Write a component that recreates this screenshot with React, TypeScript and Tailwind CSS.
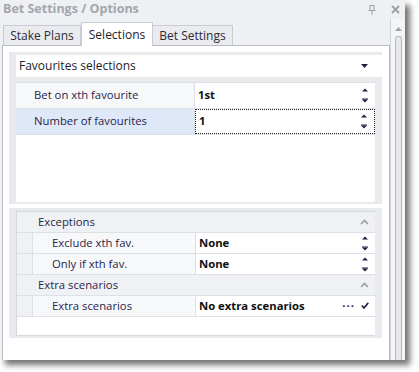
const font = { fontFamily: '"Open Sans", "Noto Sans", sans-serif' };

const Spinner = () => (
  <svg width="8" height="17" viewBox="0 0 8 17" className="shrink-0">
    <path d="M4 1.5 L7 4.5 L1 4.5 Z" fill="#1f2040" />
    <path d="M1 12.5 L7 12.5 L4 15.5 Z" fill="#1f2040" />
    <rect x="1" y="11.5" width="6" height="1" fill="#1f2040" />
  </svg>
);

const Chevron = () => (
  <svg width="9" height="6" viewBox="0 0 9 6" className="shrink-0">
    <path d="M1 5 L4.5 1.5 L8 5" fill="none" stroke="#9a9ea8" strokeWidth="1.6" />
  </svg>
);

const PropRow = ({ label, value, indent, selected, focused }: { label: string; value: string; indent?: boolean; selected?: boolean; focused?: boolean }) => (
  <div className={`flex border-b border-[#dde0e5] ${indent ? 'h-[21px]' : 'h-[26px]'}`}>
    {indent && <div className="w-[16px] shrink-0 bg-[#f0f1f4] border-r border-[#dde0e5]" />}
    <div className={`flex items-center border-r border-[#dde0e5] ${indent ? 'w-[163px] pl-[19px]' : 'w-[179px] pl-[18px]'} ${selected ? 'bg-[#dfe8f9]' : 'bg-[#f7f8fa]'} text-[#25254a]`}>
      {label}
    </div>
    <div className={`flex-1 flex items-center justify-between pl-[3px] pr-[6px] bg-white font-bold text-[#111] ${focused ? 'border border-dotted border-[#222]' : ''}`}>
      <span>{value}</span>
      <Spinner />
    </div>
  </div>
);

const Category = ({ label }: { label: string }) => (
  <div className="flex items-center justify-between h-[21px] pl-[21px] pr-[6px] bg-[#f0f1f4] border-b border-[#dde0e5] text-[#25254a]">
    <span>{label}</span>
    <Chevron />
  </div>
);

export default function App() {
  return (
    <div className="w-[419px] h-[372px] bg-white text-[11.3px]" style={font}>
      <div className="w-[405px] h-[360px] flex flex-col bg-[#eef0f3] shadow-[5px_5px_6px_rgba(0,0,0,0.55)]">
        {/* title bar */}
        <div className="h-[19px] flex items-center justify-between pl-[3px] pr-[5px]">
          <span className="text-[12.5px] font-bold text-[#a3a6ad] leading-none">Bet Settings / Options</span>
          <div className="flex items-center gap-[15px]">
            <svg width="8" height="10" viewBox="0 0 8 10">
              <rect x="2" y="0.5" width="4" height="5" fill="none" stroke="#9a9ea6" />
              <rect x="0.5" y="5" width="7" height="1" fill="#9a9ea6" />
              <rect x="3.5" y="6" width="1" height="4" fill="#9a9ea6" />
            </svg>
            <svg width="9" height="9" viewBox="0 0 9 9">
              <path d="M1 1 L8 8 M8 1 L1 8" stroke="#9a9ea6" strokeWidth="1.8" />
            </svg>
          </div>
        </div>

        <div className="flex flex-1">
          <div className="w-[390px] flex flex-col">
            {/* tabs */}
            <div className="h-[26px] flex items-end pl-[3px] relative z-10 text-[12px]">
              <div className="h-[20px] w-[78px] flex items-center justify-center border border-b-0 border-[#c9ccd2] bg-[#e9ebee] text-[#2b2b3b]">Stake Plans</div>
              <div className="h-[24px] w-[72px] flex items-center justify-center border border-b-0 border-[#c9ccd2] bg-white text-[#1d1d2d] -mb-px">Selections</div>
              <div className="h-[20px] w-[80px] flex items-center justify-center border border-b-0 border-l-0 border-[#c9ccd2] bg-[#e9ebee] text-[#2b2b3b]">Bet Settings</div>
            </div>
            {/* panel */}
            <div className="flex-1 ml-[2px] border border-b-0 border-[#b9bcc2] bg-white pl-[6px] pr-[7px] pt-[6px] flex flex-col">
              <div className="bg-[#e9eaee] pl-[7px] pt-[3px] pb-[2px] flex flex-col">
                <div className="h-[22px] bg-white flex items-center justify-between pl-[3px] pr-[14px] text-[#1d1d2d] text-[12px]">
                  <span>Favourites selections</span>
                  <svg width="7" height="4" viewBox="0 0 7 4"><path d="M0 0 L7 0 L3.5 4 Z" fill="#1f2040" /></svg>
                </div>
                <div className="mt-[5px] mr-[7px] h-[120px] bg-white border-t border-[#dde0e5]">
                  <PropRow label="Bet on xth favourite" value="1st" />
                  <PropRow label="Number of favourites" value="1" selected focused />
                </div>
              </div>
              <div className="h-[4px]" />
              <div className="bg-[#e9eaee] pl-[7px] pr-[7px] pt-[3px] pb-[2px]">
                <div className="h-[125px] bg-white border border-[#d5d8dd] border-r-0">
                  <Category label="Exceptions" />
                  <PropRow label="Exclude xth fav." value="None" indent />
                  <PropRow label="Only if xth fav." value="None" indent />
                  <Category label="Extra scenarios" />
                  <div className="flex h-[21px] border-b border-[#dde0e5]">
                    <div className="w-[16px] shrink-0 bg-[#f0f1f4] border-r border-[#dde0e5]" />
                    <div className="w-[163px] pl-[19px] flex items-center border-r border-[#dde0e5] bg-[#f7f8fa] text-[#25254a]">Extra scenarios</div>
                    <div className="flex-1 flex items-center justify-between pl-[3px] pr-[6px] font-bold text-[#111]">
                      <span>No extra scenarios</span>
                      <div className="flex items-center gap-[6px]">
                        <span className="tracking-[1px] text-[#1f2040] leading-none">···</span>
                        <svg width="8" height="7" viewBox="0 0 8 7"><path d="M0.8 3.5 L3 6 L7.3 0.8" fill="none" stroke="#1f2040" strokeWidth="1.7" /></svg>
                      </div>
                    </div>
                  </div>
                </div>
              </div>
            </div>
          </div>
          {/* scrollbar */}
          <div className="flex-1 flex flex-col items-center pt-[8px] bg-[#f4f5f7] border-l border-[#d0d3d8]">
            <svg width="7" height="4" viewBox="0 0 7 4"><path d="M0 4 L7 4 L3.5 0 Z" fill="#a0a4ab" /></svg>
            <div className="mt-[5px] w-[7px] flex-1 rounded-t-[3px] border border-b-0 border-[#b4b7bd] bg-[#e6e7ea]" />
          </div>
        </div>
      </div>
    </div>
  );
}
